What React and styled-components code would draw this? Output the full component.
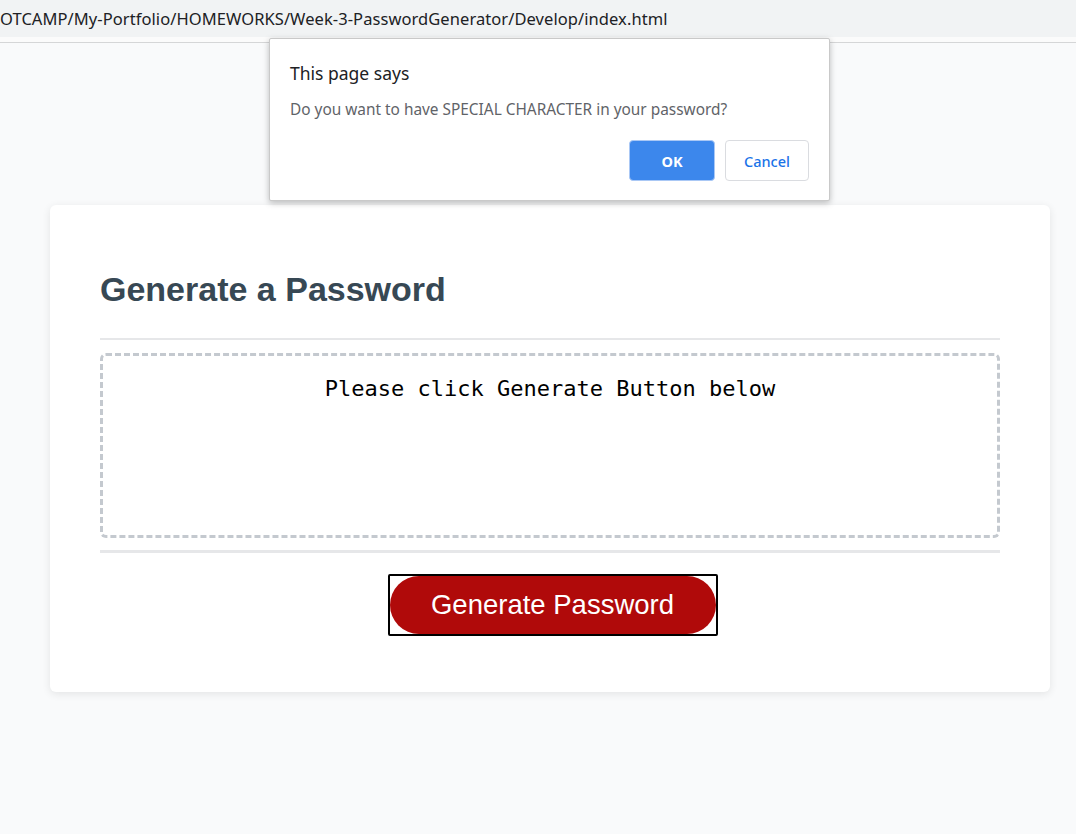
import React from "react"
import styled, { createGlobalStyle } from "styled-components"

const Colors = {
  page: "#f9fafb",
  heading: "#374854",
  red: "#b00a0a",
  rule: "#e6e7e9",
}

const GlobalStyle = createGlobalStyle`
  html, body {
    margin: 0;
    padding: 0;
    background-color: ${Colors.page};
    font-family: "Liberation Sans", Arial, sans-serif;
  }
`

const Shell = styled.div`
  position: relative;
  min-height: 834px;
`

const AddressBar = styled.div`
  height: 37px;
  background: #f1f3f4;
  display: flex;
  align-items: center;
  overflow: hidden;
  white-space: nowrap;
`

const Url = styled.span`
  font-family: "Noto Sans", "Open Sans", sans-serif;
  font-size: 16.5px;
  color: #202124;
  letter-spacing: 0.07px;
`

const BarStrip = styled.div`
  height: 5px;
  background: #fbfbfb;
  border-bottom: 1px solid #d5d6d7;
`

const Main = styled.main`
  padding: 162px 26px 0 50px;
`

const Card = styled.section`
  width: 1000px;
  box-sizing: border-box;
  background: #ffffff;
  border-radius: 6px;
  box-shadow: 0 2px 8px rgba(0, 0, 0, 0.09);
  padding: 63px 50px 56px 50px;
`

const Title = styled.h2`
  margin: 0;
  font-size: 34px;
  line-height: 43px;
  font-weight: 700;
  color: ${Colors.heading};
`

const Rule = styled.hr`
  border: 0;
  margin: ${(p) => p.$margin};
  height: ${(p) => p.$h}px;
  background: ${Colors.rule};
`

const Output = styled.div`
  box-sizing: border-box;
  height: 185px;
  border: 3px dashed #c4c9cf;
  border-radius: 6px;
  padding-top: 20px;
  text-align: center;
  font-family: "DejaVu Sans Mono", "Liberation Mono", monospace;
  font-size: 22px;
  color: #000;
`

const ButtonRow = styled.div`
  display: flex;
  justify-content: center;
  margin-top: 21px;
  padding-left: 5px;
`

const FocusRing = styled.div`
  border: 2px solid #000;
  border-radius: 2px;
  display: flex;
`

const GenerateButton = styled.button`
  width: 326px;
  height: 58px;
  border: 0;
  border-radius: 29px;
  background: ${Colors.red};
  color: #fff;
  font-family: "Liberation Sans", Arial, sans-serif;
  font-size: 27.5px;
  cursor: pointer;
`

const Dialog = styled.div`
  position: absolute;
  top: 38px;
  left: 269px;
  width: 561px;
  height: 163px;
  box-sizing: border-box;
  background: #fff;
  border: 1px solid #c9c9c9;
  border-radius: 2px;
  box-shadow: 0 2px 6px rgba(0, 0, 0, 0.25);
  padding: 21px 20px 0 20px;
  font-family: "Noto Sans", "Open Sans", sans-serif;
`

const DialogTitle = styled.div`
  font-size: 17.5px;
  color: #202124;
  line-height: 26px;
`

const DialogMessage = styled.div`
  font-size: 15.4px;
  color: #5f6368;
  margin-top: 14px;
  line-height: 20px;
`

const DialogActions = styled.div`
  display: flex;
  justify-content: flex-end;
  gap: 10px;
  margin-top: 20px;
`

const DialogButton = styled.button`
  height: 41px;
  box-sizing: border-box;
  border-radius: 4px;
  font-family: "Noto Sans", "Open Sans", sans-serif;
  font-size: 14.5px;
  font-weight: ${(p) => (p.$primary ? 700 : 500)};
  width: ${(p) => (p.$primary ? "86px" : "84px")};
  background: ${(p) => (p.$primary ? "#3c87ec" : "#fff")};
  color: ${(p) => (p.$primary ? "#fff" : "#1a73e8")};
  border: 1px solid ${(p) => (p.$primary ? "#aac8f5" : "#dadce0")};
`

class App extends React.Component {
  render() {
    return (
      <Shell>
        <GlobalStyle />
        <AddressBar>
          <Url>OTCAMP/My-Portfolio/HOMEWORKS/Week-3-PasswordGenerator/Develop/index.html</Url>
        </AddressBar>
        <BarStrip />

        <Main>
          <Card>
            <Title>Generate a Password</Title>
            <Rule $h={2} $margin="27px 0 13px 0" />
            <Output>Please click Generate Button below</Output>
            <Rule $h={3} $margin="12px 0 0 0" />
            <ButtonRow>
              <FocusRing>
                <GenerateButton>Generate Password</GenerateButton>
              </FocusRing>
            </ButtonRow>
          </Card>
        </Main>

        <Dialog>
          <DialogTitle>This page says</DialogTitle>
          <DialogMessage>Do you want to have SPECIAL CHARACTER in your password?</DialogMessage>
          <DialogActions>
            <DialogButton $primary>OK</DialogButton>
            <DialogButton>Cancel</DialogButton>
          </DialogActions>
        </Dialog>
      </Shell>
    )
  }
}

export default App
